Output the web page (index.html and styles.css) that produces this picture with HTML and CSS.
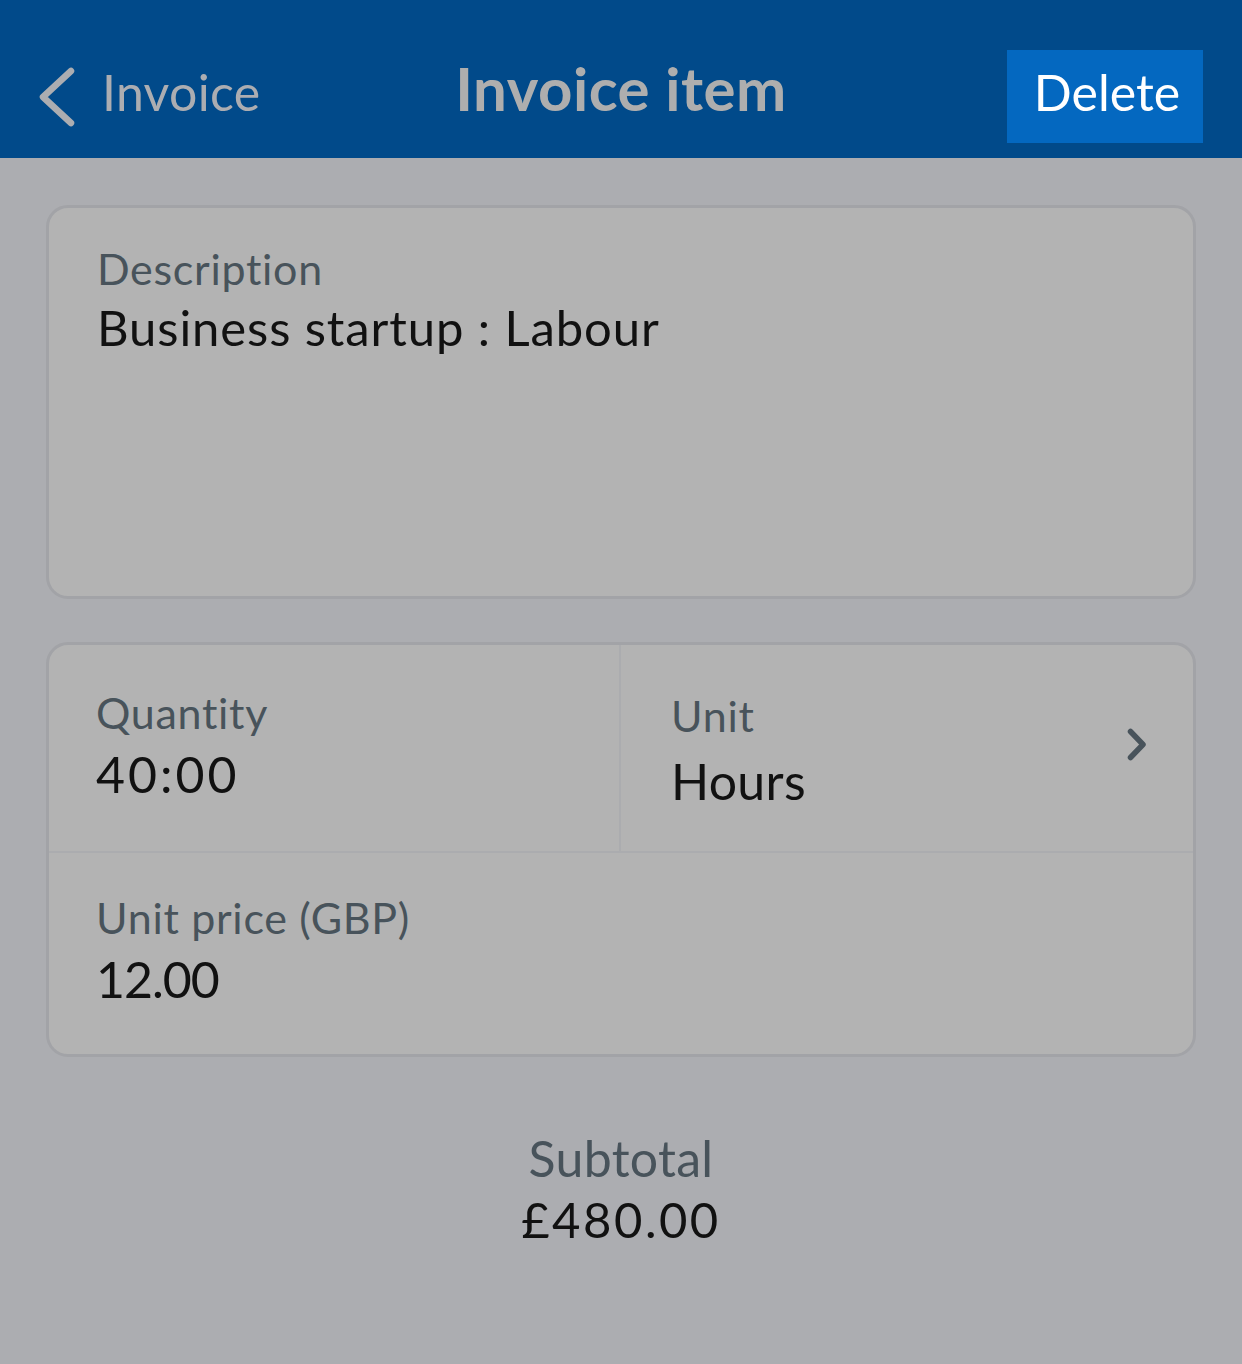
FILE: index.html
```html
<!DOCTYPE html>
<html lang="en">
<head>
<meta charset="utf-8">
<title>Invoice item</title>
<link rel="stylesheet" href="styles.css">
</head>
<body>
<header class="topbar">
  <div class="back">
    <svg class="back-icon" width="40" height="62" viewBox="0 0 40 62" aria-hidden="true">
      <path d="M34 5 L6 31 L34 57" fill="none" stroke="currentColor" stroke-width="6.5" stroke-linecap="round" stroke-linejoin="round"/>
    </svg>
    <span class="back-text">Invoice</span>
  </div>
  <h1 class="title">Invoice item</h1>
  <div class="actions">
    <button class="delete-btn" type="button">Delete</button>
  </div>
</header>

<main class="content">
  <section class="card description-card">
    <div class="label">Description</div>
    <div class="value value-desc">Business startup : Labour</div>
  </section>

  <section class="card grid-card">
    <div class="row row-split">
      <div class="cell cell-qty">
        <div class="field">
          <div class="label">Quantity</div>
          <div class="value num-wide">40:00</div>
        </div>
      </div>
      <div class="cell cell-unit">
        <div class="field field-unit">
          <div class="label">Unit</div>
          <div class="value value-unit">Hours</div>
        </div>
        <svg class="chev" width="24" height="36" viewBox="0 0 24 36" aria-hidden="true">
          <path d="M5.5 3.5 L18 16.5 L5.5 29.5" fill="none" stroke="currentColor" stroke-width="5.5" stroke-linecap="round" stroke-linejoin="round"/>
        </svg>
      </div>
    </div>
    <div class="row row-price">
      <div class="cell">
        <div class="field">
          <div class="label">Unit price (GBP)</div>
          <div class="value num-narrow">12.00</div>
        </div>
      </div>
    </div>
  </section>

  <section class="subtotal">
    <div class="subtotal-label">Subtotal</div>
    <div class="subtotal-value">£480.00</div>
  </section>
</main>
</body>
</html>
```
FILE: styles.css
```css
* { box-sizing: border-box; }

html, body {
  margin: 0;
  padding: 0;
}

body {
  background: #acadb1;
  font-family: "Lato", "Liberation Sans", sans-serif;
  color: #111111;
  min-height: 1364px;
}

/* Header */
.topbar {
  height: 158px;
  background: #014a8a;
  padding-top: 50px;
  padding-bottom: 15px;
  display: grid;
  grid-template-columns: 1fr auto 1fr;
  align-items: center;
}

.back {
  display: flex;
  align-items: center;
  color: #acadb1;
  padding-left: 37px;
  margin-bottom: 10px;
}

.back-icon {
  display: block;
  margin-top: 10px;
}

.back-text {
  font-size: 50px;
  margin-left: 25px;
  line-height: 60px;
  letter-spacing: 0.3px;
}

.title {
  margin: 0 0 17px 0;
  font-size: 60px;
  font-weight: 700;
  color: #aeaeae;
  line-height: 72px;
  letter-spacing: 0.5px;
}

.actions {
  display: flex;
  justify-content: flex-end;
  padding-right: 39px;
  height: 93px;
}

.delete-btn {
  width: 196px;
  height: 93px;
  border: 0;
  background: #0468c0;
  color: #ffffff;
  font-family: inherit;
  font-size: 50px;
  padding: 0 0 10px 4px;
  line-height: 60px;
}

/* Content */
.content {
  padding: 47px 46px 0;
}

.card {
  background: #b3b3b3;
  border: 3px solid #a2a3a7;
  border-radius: 22px;
}

.description-card {
  height: 394px;
  padding: 35px 48px 0;
}

.label {
  font-size: 43px;
  line-height: 52px;
  color: #48535b;
  letter-spacing: 0.7px;
}

.value {
  font-size: 50px;
  line-height: 71px;
  color: #111111;
}

.value-desc {
  font-size: 49px;
  line-height: 65px;
  letter-spacing: 0.9px;
}

.num-wide {
  letter-spacing: 3px;
}

.num-narrow {
  letter-spacing: -1px;
}

.grid-card {
  margin-top: 43px;
  height: 415px;
  display: flex;
  flex-direction: column;
  overflow: hidden;
}

.row {
  display: grid;
  grid-template-columns: 1fr;
}

.row-split {
  height: 208px;
  grid-template-columns: 1fr 1fr;
  border-bottom: 2px solid #abacaf;
}

.row-price {
  flex: 1;
}

.cell {
  display: flex;
  align-items: center;
  padding-left: 47px;
  min-width: 0;
}

.cell-qty {
  border-right: 2px solid #abacaf;
}

.cell-unit {
  padding-left: 50px;
  padding-right: 44px;
  justify-content: space-between;
}

.field-unit {
  margin-top: 14px;
}

.value-unit {
  line-height: 79px;
  letter-spacing: 0.3px;
}

.chev {
  display: block;
  color: #48535b;
  margin-bottom: 4px;
}

/* Subtotal */
.subtotal {
  margin-top: 71px;
  text-align: center;
}

.subtotal-label {
  font-size: 50px;
  line-height: 60px;
  color: #48535b;
  letter-spacing: 0.3px;
}

.subtotal-value {
  font-size: 49px;
  line-height: 62px;
  color: #111111;
  letter-spacing: 2.5px;
}
```
